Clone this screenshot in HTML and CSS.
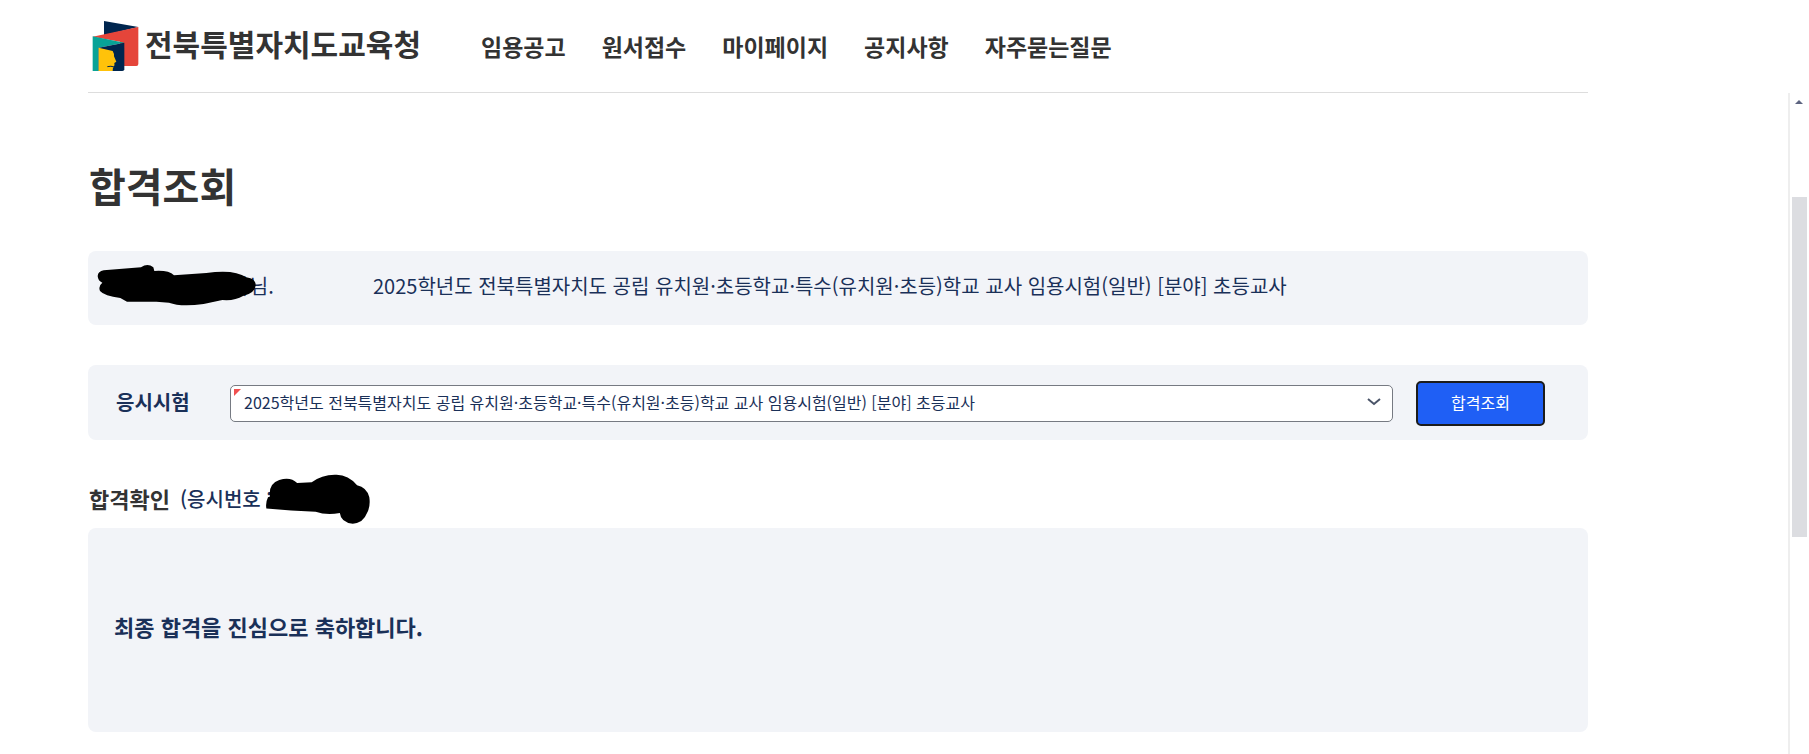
FILE: index.html
```html
<!DOCTYPE html>
<html lang="ko">
<head>
  <meta charset="UTF-8">
  <meta name="viewport" content="width=device-width, initial-scale=1.0">
  <title>합격조회 - 전북특별자치도교육청</title>
  <link rel="stylesheet" href="styles.css">
</head>
<body>
  <header class="header">
    <div class="header-inner">
      <a href="#" class="logo">
        <svg class="logo-mark" viewBox="36 30 141 156" aria-hidden="true">
          <path fill="#00264f" d="M72 33 L175 51 L72 76 Z"/>
          <path fill="#e5453a" d="M175 51 V162 Q175 168 169 168 H120 V95 L38 80 Z"/>
          <path fill="#08a397" d="M38 79 L133 98 L56 113 V183 H38 Z"/>
          <path fill="#00264f" d="M133 98 V178 Q133 183 127 183 H56 V113 Z"/>
          <path fill="#ffc20a" d="M56 113 L98 123 Q103 131 102 139 L109 155 L103 159 Q105 166 101 171 Q98 173 98 183 H56 Z"/>
          <path fill="none" stroke="#00264f" stroke-width="3" d="M82 170 Q93 167 103 171"/>
        </svg>
        <span class="logo-text">전북특별자치도교육청</span>
      </a>
      <nav class="nav">
        <a href="#">임용공고</a>
        <a href="#">원서접수</a>
        <a href="#">마이페이지</a>
        <a href="#">공지사항</a>
        <a href="#">자주묻는질문</a>
      </nav>
    </div>
  </header>

  <div class="page">
    <main class="content">
      <h1>합격조회</h1>

      <div class="panel info">
        <div class="user">
          <span>)님.</span>
          <svg class="mask mask-name" viewBox="50 340 480 126" aria-hidden="true">
            <path d="M52 376 Q53 362 70 359 L182 350 Q202 336 219 350 L222 361 Q265 358 281 374 L378 367 Q462 355 498 380 Q526 383 526 404 Q524 428 488 436 Q464 451 426 448 L370 460 Q300 469 266 456 L228 453 L140 453 L120 442 Q72 436 59 421 Q53 406 66 396 Q53 391 52 376 Z"/>
          </svg>
        </div>
        <p>2025학년도 전북특별자치도 공립 유치원·초등학교·특수(유치원·초등)학교 교사 임용시험(일반) [분야] 초등교사</p>
      </div>

      <form class="panel search">
        <label for="exam">응시시험</label>
        <div class="select-box">
          <select id="exam">
            <option>2025학년도 전북특별자치도 공립 유치원·초등학교·특수(유치원·초등)학교 교사 임용시험(일반) [분야] 초등교사</option>
          </select>
          <svg class="arrow" viewBox="0 0 14 8" aria-hidden="true"><path d="M1 1 L7 6 L13 1"/></svg>
        </div>
        <button type="button">합격조회</button>
      </form>

      <div class="result-head">
        <h2>합격확인</h2>
        <span class="number">(응시번호 :
          <svg class="mask mask-number" viewBox="562 42 318 151" aria-hidden="true">
            <path d="M565 146 Q562 128 570 112 L576 110 Q571 71 604 60 Q638 49 658 69 L702 67 Q733 43 775 44 Q812 43 839 76 Q868 82 876 112 Q880 140 869 160 Q858 190 826 192 Q790 189 787 160 Q745 167 714 156 L640 152 Z"/>
          </svg>
        </span>
      </div>
      <div class="panel result">
        <strong>최종 합격을 진심으로 축하합니다.</strong>
      </div>
    </main>

    <div class="scrollbar">
      <span class="scroll-up"></span>
      <span class="scroll-thumb"></span>
    </div>
  </div>
</body>
</html>
```

FILE: styles.css
```css
* {
  box-sizing: border-box;
  margin: 0;
  padding: 0;
}
body {
  display: flex;
  flex-direction: column;
  min-height: 100vh;
  font-family: "Noto Sans CJK KR", sans-serif;
  font-size: 20px;
  line-height: 30px;
  color: #1a3058;
  background: #fff;
}
a {
  color: #333;
  text-decoration: none;
}

/* header */
.header {
  padding: 0 88px;
}
.header-inner {
  display: flex;
  align-items: center;
  max-width: 1500px;
  height: 93px;
  border-bottom: 1px solid #ddd;
}
.logo {
  display: flex;
  align-items: center;
  gap: 6px;
  padding-left: 4px;
}
.logo-mark {
  width: 47px;
  height: 52px;
}
.logo-text {
  padding-bottom: 6px;
  font-size: 30px;
  font-weight: 700;
}
.nav {
  display: flex;
  gap: 36px;
  margin-left: 60px;
  font-size: 23px;
  font-weight: 700;
}

/* content */
.page {
  display: flex;
  flex: 1;
  justify-content: space-between;
}
.content {
  flex: 1;
  max-width: 1588px;
  padding: 62px 0 20px 88px;
}
h1 {
  margin-bottom: 36px;
  padding-left: 1px;
  font-size: 40px;
  line-height: 60px;
  color: #333;
}
.panel {
  display: flex;
  align-items: center;
  background: #f2f4f8;
  border-radius: 8px;
}
.info {
  height: 74px;
  margin-bottom: 40px;
  padding-bottom: 4px;
}
.user {
  position: relative;
  width: 285px;
  padding-left: 155px;
}
.mask {
  position: absolute;
  fill: #000;
}
.mask-name {
  top: -7px;
  left: 9px;
  width: 160px;
  height: 42px;
}
.search {
  height: 75px;
  margin-bottom: 40px;
  padding: 2px 43px 0 28px;
}
.search label {
  width: 114px;
  padding-bottom: 4px;
  font-weight: 700;
}
.select-box {
  position: relative;
  flex: 1;
  margin-right: 23px;
}
.select-box::before {
  content: "";
  position: absolute;
  top: 4px;
  left: 4px;
  border-top: 7px solid #f05050;
  border-right: 7px solid transparent;
}
select {
  display: block;
  width: 100%;
  height: 37px;
  padding: 0 40px 3px 13px;
  font-family: inherit;
  font-size: 16px;
  color: #1a3058;
  background: #fff;
  border: 1px solid #767a82;
  border-radius: 5px;
  appearance: none;
}
.arrow {
  position: absolute;
  top: 13px;
  right: 12px;
  width: 14px;
  height: 8px;
  fill: none;
  stroke: #4a5468;
  stroke-width: 2;
}
button {
  width: 129px;
  height: 45px;
  padding-bottom: 4px;
  font-family: inherit;
  font-size: 16px;
  color: #fff;
  background: #1f5ff5;
  border: 2px solid #1c1c1c;
  border-radius: 5px;
}
.result-head {
  display: flex;
  align-items: center;
  gap: 10px;
  height: 40px;
  margin-bottom: 8px;
  padding-bottom: 2px;
}
h2 {
  padding: 0 0 2px 1px;
  font-size: 22px;
  font-weight: 700;
  color: #333;
}
.number {
  position: relative;
  font-weight: 500;
}
.mask-number {
  top: -10px;
  left: 85px;
  width: 106px;
  height: 50px;
}
.result {
  height: 204px;
  padding: 0 26px 8px;
}
.result strong {
  font-size: 22px;
  font-weight: 700;
}

/* scrollbar */
.scrollbar {
  width: 21px;
  border-left: 2px solid #eee;
}
.scroll-up {
  display: block;
  width: 0;
  margin: 7px 0 0 5px;
  border: 4px solid transparent;
  border-top: 0;
  border-bottom-color: #5d6480;
}
.scroll-thumb {
  display: block;
  width: 15px;
  height: 340px;
  margin: 93px 0 0 2px;
  background: #dcdde1;
}
```
